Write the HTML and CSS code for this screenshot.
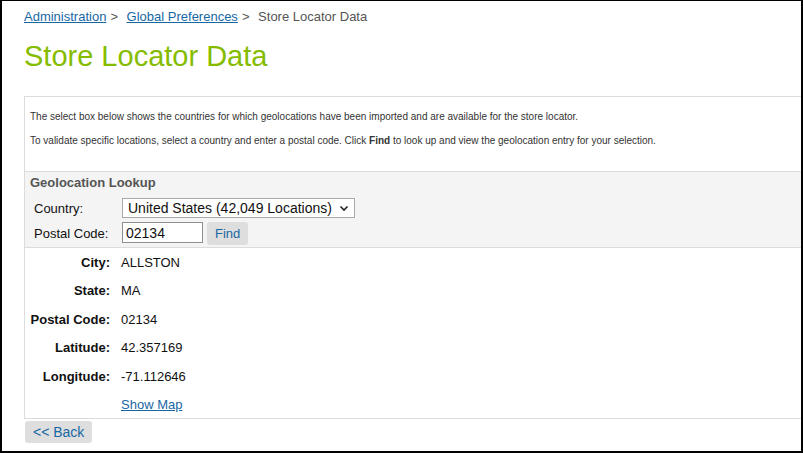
FILE: index.html
```html
<!DOCTYPE html>
<html lang="en">

<head>
    <meta charset="UTF-8">
    <meta name="viewport" content="width=device-width, initial-scale=1.0">
    <title>Store Locator Data</title>
    <link rel="stylesheet" href="styles.css">
</head>

<body>
    <div class="frame">
        <div class="crumbs">
            <a href="#">Administration</a><span class="sep">&gt;</span>
            <a href="#">Global Preferences</a><span class="sep">&gt;</span>
            <span class="here">Store Locator Data</span>
        </div>

        <h1 class="title">Store Locator Data</h1>

        <div class="panel">
            <div class="intro">
                <p>The select box below shows the countries for which geolocations have been imported and are available for the store locator.</p>
                <p>To validate specific locations, select a country and enter a postal code. Click <b>Find</b> to look up and view the geolocation entry for your selection.</p>
            </div>

            <div class="lookup">
                <div class="lookup-head">Geolocation Lookup</div>
                <div class="form">
                    <label for="country">Country:</label>
                    <span class="select-wrap">
                        <select id="country" class="sel">
                            <option>United States (42,049 Locations)</option>
                        </select>
                        <svg class="chev" width="10" height="7" viewBox="0 0 10 7">
                            <path d="M1.5 1.5 L5 5 L8.5 1.5" fill="none" stroke="#222" stroke-width="1.6" />
                        </svg>
                    </span>

                    <label for="postal">Postal Code:</label>
                    <div class="postal-row">
                        <input id="postal" class="ip" type="text" value="02134">
                        <button class="btn">Find</button>
                    </div>
                </div>
            </div>

            <div class="result">
                <div class="lbl">City:</div>
                <div>ALLSTON</div>
                <div class="lbl">State:</div>
                <div>MA</div>
                <div class="lbl">Postal Code:</div>
                <div>02134</div>
                <div class="lbl">Latitude:</div>
                <div>42.357169</div>
                <div class="lbl">Longitude:</div>
                <div>-71.112646</div>
                <div></div>
                <div><a href="#">Show Map</a></div>
            </div>
        </div>

        <button class="btn back">&lt;&lt; Back</button>
    </div>
</body>

</html>
```

FILE: styles.css
```css
* {
    box-sizing: border-box;
}

body {
    margin: 0;
    font-family: "Liberation Sans", Arial, sans-serif;
    font-size: 13px;
    color: #111;
    background: #fff;
}

a {
    color: #1767a3;
}

.frame {
    width: 803px;
    height: 453px;
    border-top: 1px solid #000;
    border-left: 2px solid #000;
    border-right: 2px solid #000;
    border-bottom: 2px solid #000;
    padding-left: 22px;
    overflow: hidden;
}

.crumbs {
    padding-top: 8px;
    line-height: 16px;
    font-size: 13px;
    color: #555;
}

.sep {
    margin: 0 5px 0 4px;
}

.title {
    margin: 0;
    padding-top: 14px;
    font-size: 29px;
    font-weight: normal;
    line-height: 34px;
    color: #85bc00;
}

.panel {
    margin-top: 23px;
    border: 1px solid #dcdcdc;
    border-right: none;
}

.intro {
    padding: 2px 6px 12px 5px;
    font-size: 10px;
    color: #333;
}

.intro p {
    margin: 12px 0;
    line-height: 12px;
}

.lookup {
    background: #f4f4f4;
    border-top: 1px solid #dcdcdc;
    border-bottom: 1px solid #dcdcdc;
    padding: 3px 6px 2px 5px;
}

.lookup-head {
    font-weight: bold;
    color: #555;
    line-height: 16px;
}

.form {
    display: grid;
    grid-template-columns: 88px auto;
    row-gap: 4px;
    align-items: center;
    margin-top: 7px;
    padding-left: 4px;
}

.select-wrap {
    position: relative;
    display: inline-block;
    width: 233px;
}

.sel {
    appearance: none;
    -webkit-appearance: none;
    width: 233px;
    height: 20px;
    border: 1px solid #a9a9a9;
    border-radius: 0;
    background: #fff;
    padding: 0 0 0 5px;
    font-family: inherit;
    font-size: 14px;
    color: #111;
}

.chev {
    position: absolute;
    right: 6px;
    top: 7px;
}

.postal-row {
    display: flex;
    align-items: flex-start;
    gap: 4px;
}

.ip {
    width: 81px;
    height: 21px;
    margin-top: 0;
    border: 1px solid #8f8f8f;
    padding: 0 3px;
    font-family: inherit;
    font-size: 14px;
    color: #111;
}

.btn {
    cursor: pointer;
    height: 23px;
    padding: 0 8px;
    border: none;
    border-radius: 3px;
    background-color: #dedede;
    color: #1767a3;
    font-family: inherit;
    font-size: 13px;
}

.result {
    display: grid;
    grid-template-columns: 80px auto;
    column-gap: 11px;
    row-gap: 12.4px;
    line-height: 16px;
    padding: 7px 0 5px 5px;
}

.lbl {
    text-align: right;
    font-weight: bold;
}

.back {
    margin-top: 2px;
    margin-left: 1px;
    height: 22px;
    font-size: 14px;
}
```
